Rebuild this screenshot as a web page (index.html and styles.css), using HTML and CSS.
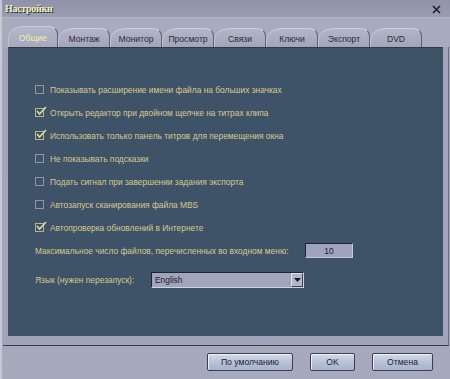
FILE: index.html
```html
<!DOCTYPE html>
<html lang="ru">
<head>
<meta charset="utf-8">
<title>Настройки</title>
<link rel="stylesheet" href="styles.css">
</head>
<body>
<div class="window">
  <div class="titlebar">
    <span class="title">Настройки</span>
    <svg class="close" width="9" height="9" viewBox="0 0 9 9"><path d="M1 1L8 8M8 1L1 8" stroke="#1c1c24" stroke-width="1.5"/></svg>
  </div>
  <div class="tabs">
    <div class="tab active">Общие</div>
    <div class="tab">Монтаж</div>
    <div class="tab">Монитор</div>
    <div class="tab">Просмотр</div>
    <div class="tab">Связи</div>
    <div class="tab">Ключи</div>
    <div class="tab">Экспорт</div>
    <div class="tab">DVD</div>
  </div>
  <div class="frame">
    <div class="panel">
      <div class="opt"><span class="cb"></span><span>Показывать расширение имени файла на больших значках</span></div>
      <div class="opt"><span class="cb on"><svg class="tick" width="12" height="11" viewBox="0 0 12 11"><path d="M2 5L4.5 8L11 1" fill="none" stroke="#e4dc98" stroke-width="1.5"/></svg></span><span>Открыть редактор при двойном щелчке на титрах клипа</span></div>
      <div class="opt"><span class="cb on"><svg class="tick" width="12" height="11" viewBox="0 0 12 11"><path d="M2 5L4.5 8L11 1" fill="none" stroke="#e4dc98" stroke-width="1.5"/></svg></span><span>Использовать только панель титров для перемещения окна</span></div>
      <div class="opt"><span class="cb"></span><span>Не показывать подсказки</span></div>
      <div class="opt"><span class="cb"></span><span>Подать сигнал при завершении задания экспорта</span></div>
      <div class="opt"><span class="cb"></span><span>Автозапуск сканирования файла MBS</span></div>
      <div class="opt"><span class="cb on"><svg class="tick" width="12" height="11" viewBox="0 0 12 11"><path d="M2 5L4.5 8L11 1" fill="none" stroke="#e4dc98" stroke-width="1.5"/></svg></span><span>Автопроверка обновлений в Интернете</span></div>
      <div class="field"><span class="lbl-max">Максимальное число файлов, перечисленных во входном меню:</span><span class="num">10</span></div>
      <div class="field lang"><span class="lbl-lang">Язык (нужен перезапуск):</span>
        <div class="select"><span class="sel-text">English</span><span class="drop"><svg width="7" height="4" viewBox="0 0 7 4"><path d="M0 0H7L3.5 4Z" fill="#1a1a22"/></svg></span></div>
      </div>
    </div>
  </div>
  <div class="footer">
    <div class="btn b-def">По умолчанию</div>
    <div class="btn b-ok">OK</div>
    <div class="btn b-cancel">Отмена</div>
  </div>
</div>
</body>
</html>
```

FILE: styles.css
```css
* { box-sizing: border-box; }
html, body { margin: 0; padding: 0; }
body { font-family: "Liberation Sans", Arial, sans-serif; font-size: 8.4px; }

.window {
  width: 450px;
  height: 379px;
  background: linear-gradient(180deg, #a9acbf 0%, #a3a6ba 60%, #a7aabd 100%);
  border-left: 2px solid #c6c8d6;
  display: flex;
  flex-direction: column;
  overflow: hidden;
}

.titlebar {
  height: 18px;
  display: flex;
  align-items: center;
  justify-content: space-between;
  padding: 0 9px 0 3px;
  background: linear-gradient(180deg, #8f92a8 0%, #9a9db1 100%);
  border-bottom: 1px solid #b4b7c8;
}
.title {
  font-family: "Liberation Serif", "Times New Roman", serif;
  font-weight: bold;
  font-size: 10px;
  color: #f2f0b4;
  text-shadow: 1px 1px 0 #30323e;
  letter-spacing: -0.3px;
}
.close { display: block; margin-top: 1px; }

.tabs {
  display: flex;
  align-items: flex-end;
  height: 29px;
  padding-left: 6px;
}
.tab {
  width: 52px;
  height: 19px;
  display: flex;
  align-items: center;
  justify-content: center;
  padding-top: 2px;
  font-size: 8.6px;
  color: #2a2c3a;
  background: linear-gradient(180deg, #b3b6c8 0%, #a2a5b9 100%);
  border-top: 1px solid #cacdda;
  border-left: 1px solid #c0c2d2;
  border-right: 1px solid #5e6276;
  border-radius: 16px 9px 0 0 / 12px 8px 0 0;
}
.tab.active {
  width: 50px;
  height: 21px;
  color: #eeeeaa;
  background: linear-gradient(180deg, #b4b7c9 0%, #a6a9bc 100%);
}

.frame {
  margin: 0 1px;
  padding: 0 5px 9px 5px;
  background: #a2a5b9;
  border-bottom: 1px solid #3a3c4a;
  border-right: 1px solid #6a6d80;
}
.panel {
  height: 289px;
  background: #3e5368;
  border-top: 1px solid #2c3a4a;
  padding: 30px 0 0 27px;
  color: #d8c98f;
}

.opt {
  height: 23px;
  display: flex;
  align-items: center;
}
.cb {
  position: relative;
  width: 9px;
  height: 9px;
  border: 1px solid #8e97a2;
  margin-right: 6px;
  flex: none;
}
.cb.on { border-color: #b8b48a; }
.tick { position: absolute; left: -1px; top: -3px; }

.field {
  height: 23px;
  display: flex;
  align-items: center;
}
.lbl-max { width: 270px; }
.num {
  width: 48px;
  height: 15px;
  background: #9fa3be;
  border: 1px solid #1e2430;
  border-right-color: #c4c7d8;
  border-bottom-color: #c4c7d8;
  color: #22242e;
  display: flex;
  align-items: center;
  justify-content: center;
}
.lang { margin-top: 6px; }
.lbl-lang { width: 116px; }
.select {
  width: 153px;
  height: 16px;
  background: #a0a4bd;
  border: 1px solid #1e2430;
  border-right-color: #d0d2e0;
  border-bottom-color: #d0d2e0;
  display: flex;
  align-items: center;
  justify-content: space-between;
  color: #1e2028;
  padding-left: 3px;
}
.drop {
  width: 12px;
  height: 14px;
  background: #b4b8cc;
  border: 1px solid #e0e2ee;
  border-right-color: #3a3e4e;
  border-bottom-color: #3a3e4e;
  display: flex;
  align-items: center;
  justify-content: center;
}

.footer {
  flex: 1;
  display: flex;
  justify-content: flex-end;
  align-items: flex-start;
  gap: 17px;
  padding: 7px 17px 0 0;
}
.btn {
  height: 18px;
  display: flex;
  align-items: center;
  justify-content: center;
  font-size: 8.6px;
  color: #22242e;
  background: linear-gradient(180deg, #d4dae8 0%, #b8c2d8 50%, #a6b2cc 100%);
  border: 1px solid #3a4050;
  border-radius: 2px;
  box-shadow: inset 1px 1px 0 #eef0f6;
}
.b-def { width: 86px; }
.b-ok { width: 45px; }
.b-cancel { width: 61px; }
```
